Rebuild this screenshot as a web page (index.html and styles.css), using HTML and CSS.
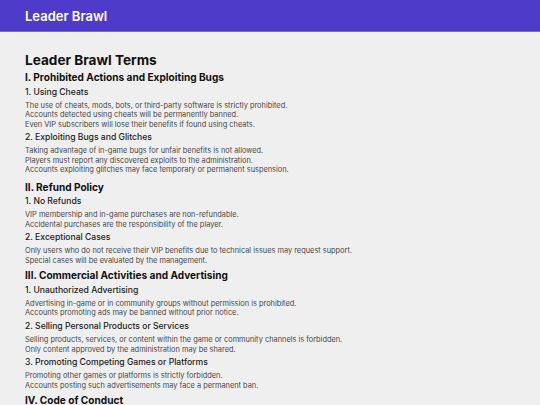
FILE: index.html
```html
<!DOCTYPE html>
<html lang="en">
<head>
    <meta charset="UTF-8">
    <meta name="viewport" content="width=device-width, initial-scale=1.0">
    <title>Leader Brawl Terms</title>
    <link rel="stylesheet" href="styles.css">
</head>
<body>
    <header class="topbar">
        <span class="brand">Leader Brawl</span>
    </header>

    <main class="terms">
        <h1>Leader Brawl Terms</h1>

        <section class="section section-first">
            <h2>I. Prohibited Actions and Exploiting Bugs</h2>
            <h3>1. Using Cheats</h3>
            <p>The use of cheats, mods, bots, or third-party software is strictly prohibited.<br>
            Accounts detected using cheats will be permanently banned.<br>
            Even VIP subscribers will lose their benefits if found using cheats.</p>
            <h3>2. Exploiting Bugs and Glitches</h3>
            <p>Taking advantage of in-game bugs for unfair benefits is not allowed.<br>
            Players must report any discovered exploits to the administration.<br>
            Accounts exploiting glitches may face temporary or permanent suspension.</p>
        </section>

        <section class="section">
            <h2>II. Refund Policy</h2>
            <h3>1. No Refunds</h3>
            <p>VIP membership and in-game purchases are non-refundable.<br>
            Accidental purchases are the responsibility of the player.</p>
            <h3>2. Exceptional Cases</h3>
            <p>Only users who do not receive their VIP benefits due to technical issues may request support.<br>
            Special cases will be evaluated by the management.</p>
        </section>

        <section class="section">
            <h2>III. Commercial Activities and Advertising</h2>
            <h3>1. Unauthorized Advertising</h3>
            <p>Advertising in-game or in community groups without permission is prohibited.<br>
            Accounts promoting ads may be banned without prior notice.</p>
            <h3>2. Selling Personal Products or Services</h3>
            <p>Selling products, services, or content within the game or community channels is forbidden.<br>
            Only content approved by the administration may be shared.</p>
            <h3>3. Promoting Competing Games or Platforms</h3>
            <p>Promoting other games or platforms is strictly forbidden.<br>
            Accounts posting such advertisements may face a permanent ban.</p>
        </section>

        <section class="section">
            <h2>IV. Code of Conduct</h2>
        </section>
    </main>
</body>
</html>
```

FILE: styles.css
```css
body {
    margin: 0;
    background: #efefef;
    font-family: 'Inter', 'Liberation Sans', sans-serif;
    color: #222;
    overflow: hidden;
}

.topbar {
    height: 31px;
    background-color: #4f3bc9;
    border-bottom: 1px solid #7a6ad8;
    display: flex;
    align-items: center;
    padding: 0 25px;
}

.brand {
    color: #fff;
    font-size: 13px;
    font-weight: 600;
}

.terms {
    padding: 18px 25px 0;
}

.terms h1 {
    font-size: 13.6px;
    line-height: 20px;
    font-weight: 700;
    color: #111;
    margin: 0;
}

.section-first {
    margin-bottom: 5px;
}

.section h2 {
    font-size: 10.1px;
    line-height: 14px;
    font-weight: 700;
    color: #111;
    margin: 0 0 2.5px;
}

.section h3 {
    font-size: 8.6px;
    line-height: 11px;
    font-weight: 500;
    color: #222;
    margin: 0 0 3.2px;
}

.section p {
    font-size: 7.4px;
    line-height: 9.4px;
    color: #484848;
    margin: 0 0 3.2px;
}
```
